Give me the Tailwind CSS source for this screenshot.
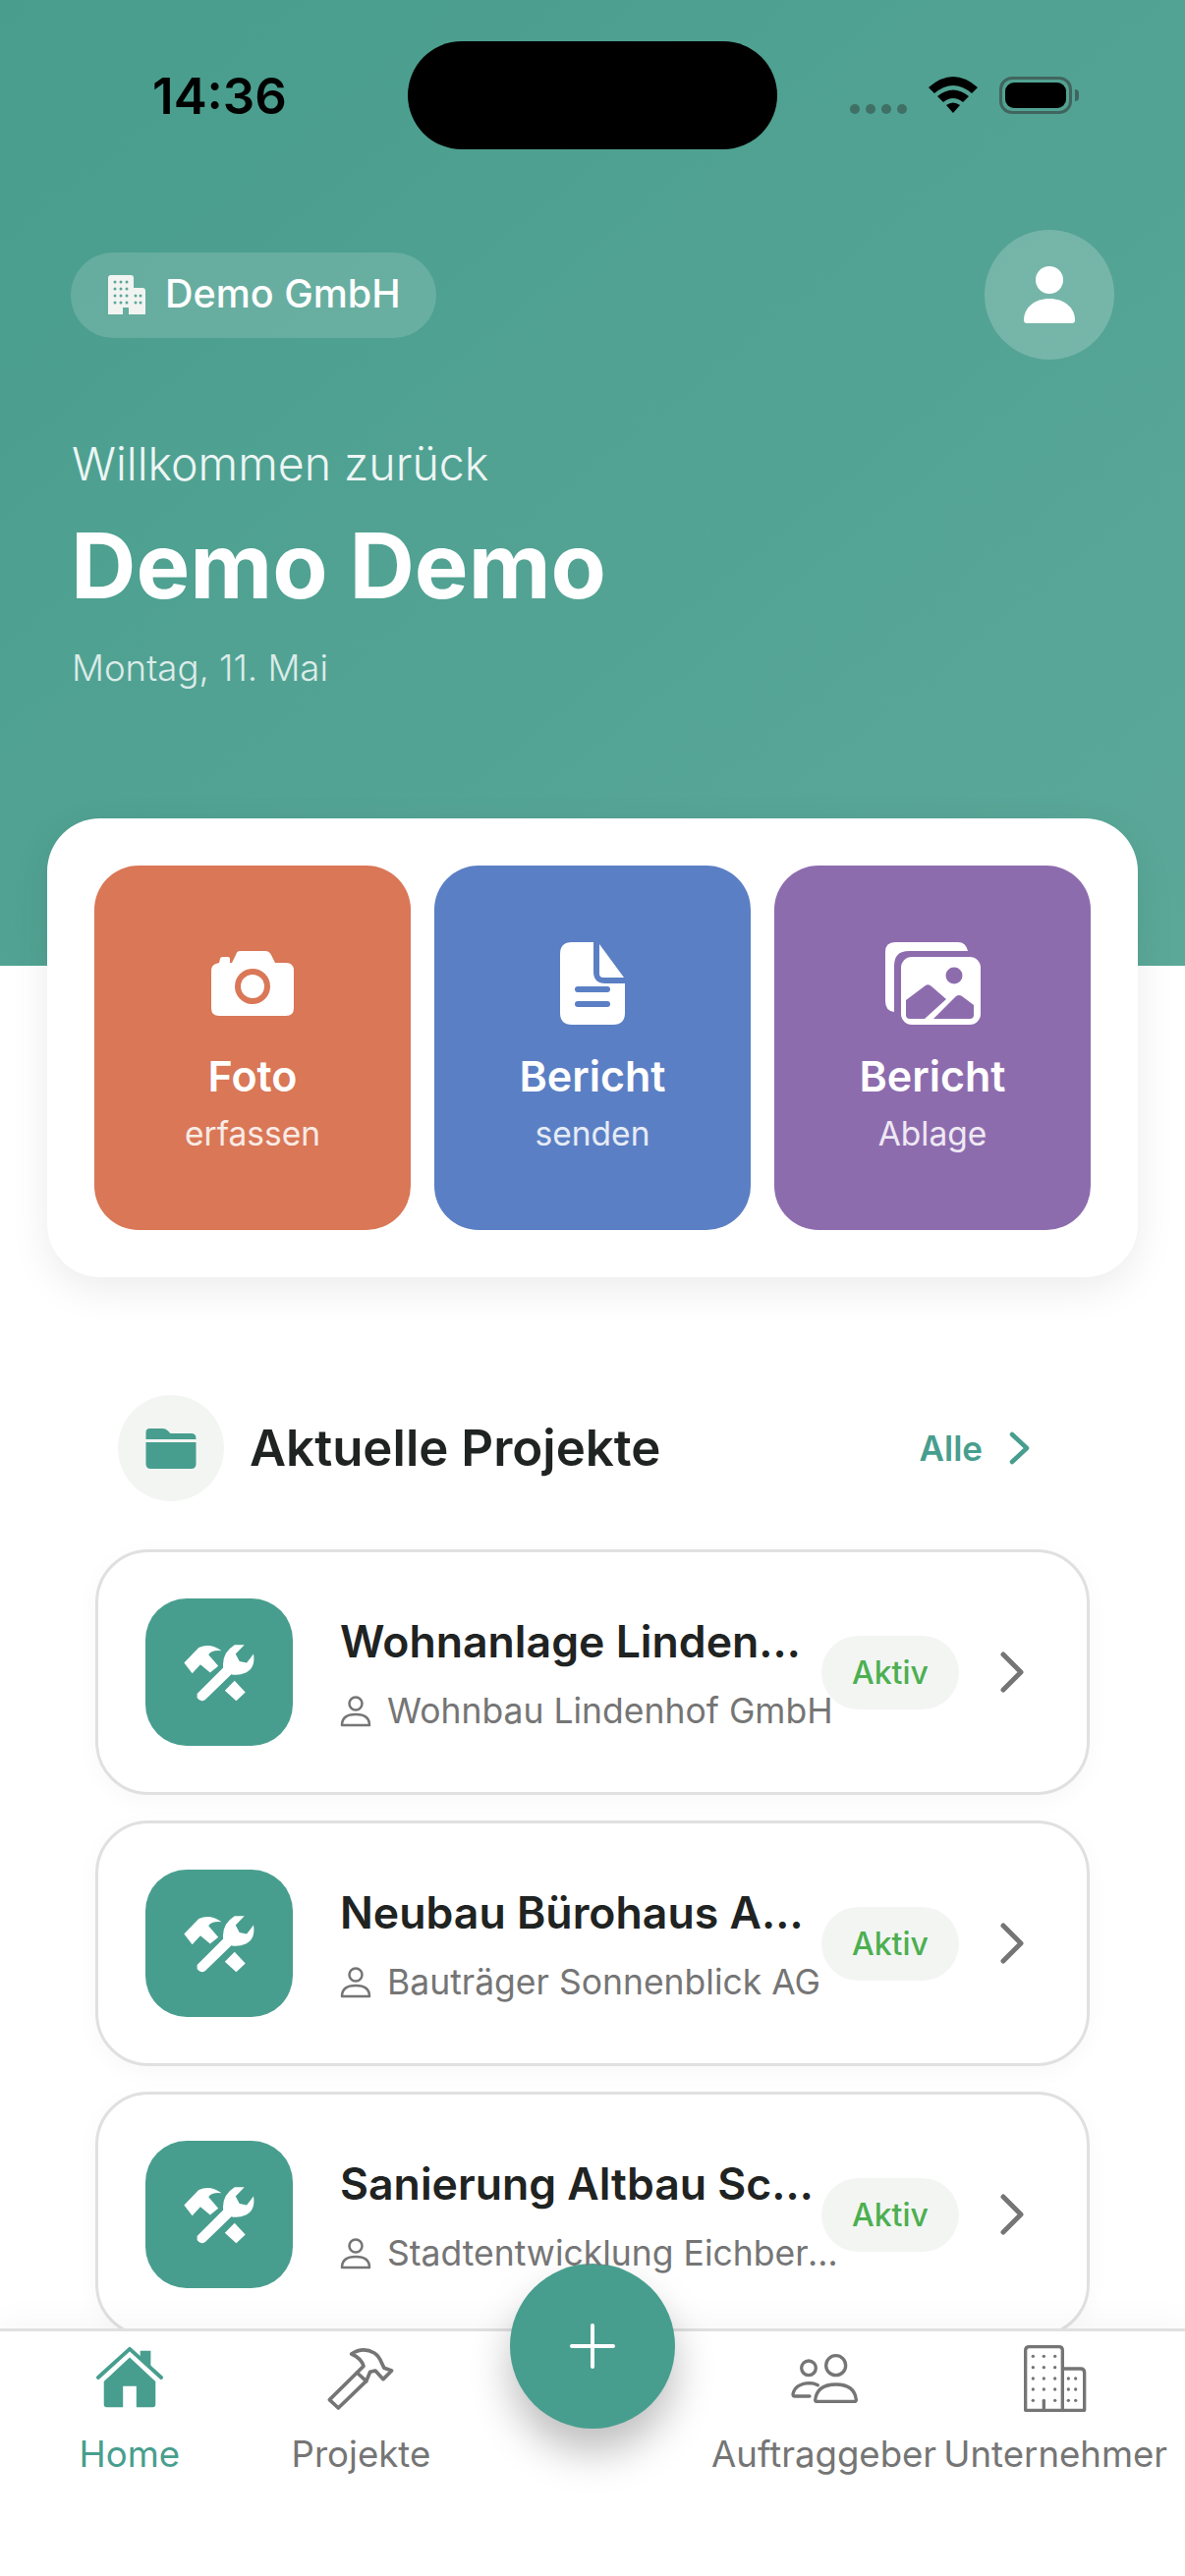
<!DOCTYPE html>
<html lang="de">
<head>
    <meta charset="UTF-8">
    <meta name="viewport" content="width=device-width, initial-scale=1.0">
    <title>Home - Demo GmbH</title>
    <script src="https://cdn.jsdelivr.net/npm/@tailwindcss/browser@4"></script>
</head>
<body class="bg-white">
<div class="relative w-[1206px] h-[2622px] flex flex-col overflow-hidden bg-white font-['Inter',sans-serif]">

    <!-- Header -->
    <header class="h-[983px] shrink-0 bg-linear-to-br from-[#489d8d] to-[#5ba899] pt-[42px]">
        <!-- Status bar -->
        <div class="flex items-center h-[110px]">
            <span class="ml-[155px] w-[137px] text-[51px] font-semibold leading-none text-black text-center">14:36</span>
            <div class="ml-[123px] w-[376px] h-[110px] rounded-[55px] bg-black"></div>
            <div class="ml-[74px] flex gap-[6px] mt-[28px]">
                <span class="w-[10px] h-[10px] rounded-full bg-[#3f6f65]"></span>
                <span class="w-[10px] h-[10px] rounded-full bg-[#3f6f65]"></span>
                <span class="w-[10px] h-[10px] rounded-full bg-[#3f6f65]"></span>
                <span class="w-[10px] h-[10px] rounded-full bg-[#3f6f65]"></span>
            </div>
            <svg class="ml-[22px]" width="50" height="38" viewBox="0 0 50 38" fill="#000">
                <path d="M0 11 Q25 -11 50 11 L44 17 Q25 1 6 17Z"/>
                <path d="M9 20 Q25 7 41 20 L35 26 Q25 18 15 26Z"/>
                <path d="M18 29 Q25 24 32 29 L25 37Z"/>
            </svg>
            <div class="ml-[22px] w-[74px] h-[38px] rounded-[13px] border-[3px] border-[#40655e] p-[3px]">
                <div class="w-full h-full rounded-[9px] bg-black"></div>
            </div>
            <div class="ml-[3px] w-[4px] h-[12px] rounded-r-full bg-[#40655e]"></div>
        </div>

        <!-- Firm + avatar -->
        <div class="mt-[82px] pl-[72px] pr-[72px] flex items-center justify-between">
            <div class="h-[87px] w-[372px] rounded-full bg-white/15 flex items-center pl-[38px]">
                <svg width="38" height="40" viewBox="0 0 38 40" fill="#f2f4f2">
                    <path d="M3 0 H23 Q26 0 26 3 V13 H35 Q38 13 38 16 V40 H21 V33 H15 V40 H0 V3 Q0 0 3 0Z"/>
                    <g fill="#5ca798">
                        <circle cx="7" cy="7" r="1.5"/><circle cx="13" cy="7" r="1.5"/><circle cx="19" cy="7" r="1.5"/>
                        <circle cx="7" cy="14" r="1.5"/><circle cx="13" cy="14" r="1.5"/><circle cx="19" cy="14" r="1.5"/>
                        <circle cx="7" cy="21" r="1.5"/><circle cx="13" cy="21" r="1.5"/><circle cx="19" cy="21" r="1.5"/>
                        <circle cx="7" cy="28" r="1.5"/><circle cx="13" cy="28" r="1.5"/><circle cx="19" cy="28" r="1.5"/>
                        <circle cx="28" cy="21" r="1.5"/><circle cx="33" cy="21" r="1.5"/>
                        <circle cx="28" cy="28" r="1.5"/><circle cx="33" cy="28" r="1.5"/>
                    </g>
                </svg>
                <span class="ml-[20px] text-[39.5px] font-medium text-white">Demo GmbH</span>
            </div>
            <div class="w-[132px] h-[132px] rounded-full bg-white/20 flex items-center justify-center">
                <svg width="54" height="58" viewBox="0 0 54 58" fill="#fff">
                    <circle cx="27" cy="14" r="14"/>
                    <path d="M1 55 C1 42 12 33 27 33 C42 33 53 42 53 55 Q53 58 50 58 L4 58 Q1 58 1 55Z"/>
                </svg>
            </div>
        </div>

        <!-- Greeting -->
        <p class="mt-[76px] ml-[73px] text-[46.5px] leading-[60px] font-light text-white/90">Willkommen zurück</p>
        <h1 class="mt-[24px] ml-[72px] text-[92px] leading-[100px] font-bold text-white">Demo Demo</h1>
        <p class="mt-[34px] ml-[73px] text-[36.6px] leading-[40px] font-light text-white/80">Montag, 11. Mai</p>
    </header>

    <!-- Quick actions -->
    <section class="relative mx-[48px] -mt-[150px] h-[467px] shrink-0 rounded-[54px] bg-white shadow-[0_12px_40px_rgba(0,0,0,0.08)] p-[48px] grid grid-cols-3 gap-[24px]">
        <div class="rounded-[45px] bg-[#d97757] flex flex-col items-center pt-[78px] text-white">
            <div class="h-[84px] flex items-center">
                <svg width="84" height="66" viewBox="0 0 84 66">
                    <path fill="#fff" d="M29 0 H55 Q59 0 61 4 L65 12 H76 Q84 12 84 20 V58 Q84 66 76 66 H8 Q0 66 0 58 V20 Q0 13 8 12 L9 8 Q9 6 12 6 H17 Q19 6 19 8 V12 H21 L25 4 Q26 0 29 0Z"/>
                    <circle cx="42" cy="36" r="18" fill="#d97757"/>
                    <circle cx="42" cy="36" r="12" fill="#fff"/>
                </svg>
            </div>
            <span class="mt-[27px] text-[43px] leading-[50px] font-semibold">Foto</span>
            <span class="mt-[14px] text-[33.5px] leading-[40px] text-white/85">erfassen</span>
        </div>
        <div class="rounded-[45px] bg-[#5b7fc4] flex flex-col items-center pt-[78px] text-white">
            <div class="h-[84px] flex items-center">
                <svg width="66" height="84" viewBox="0 0 66 84" fill="#fff">
                    <path d="M12 0 H34 V30 Q34 42 46 42 H66 V72 Q66 84 54 84 H12 Q0 84 0 72 V12 Q0 0 12 0Z"/>
                    <path d="M40 2 L65 36 H44 Q40 36 40 32Z"/>
                    <rect x="15" y="45" width="36" height="6" rx="3" fill="#5b7fc4"/>
                    <rect x="15" y="60" width="36" height="6" rx="3" fill="#5b7fc4"/>
                </svg>
            </div>
            <span class="mt-[27px] text-[43px] leading-[50px] font-semibold">Bericht</span>
            <span class="mt-[14px] text-[33.5px] leading-[40px] text-white/85">senden</span>
        </div>
        <div class="rounded-[45px] bg-[#8d6cae] flex flex-col items-center pt-[78px] text-white">
            <div class="h-[84px] flex items-center">
                <svg width="97" height="84" viewBox="0 0 97 84">
                    <path fill="#fff" d="M10 0 H74 Q82 0 84 9 H24 Q9 9 9 24 V71 Q0 70 0 60 V10 Q0 0 10 0Z"/>
                    <rect x="16" y="15" width="81" height="69" rx="11" fill="#fff"/>
                    <circle cx="70" cy="34" r="8.5" fill="#8d6cae"/>
                    <path fill="#8d6cae" d="M21 59 L41 44 Q44 42 47 45 L62 58 L40 78 H25 Q21 78 21 74Z"/>
                    <path fill="#8d6cae" d="M49 78 L72 55 Q75 53 78 55 L90 64 V74 Q90 78 86 78Z"/>
                </svg>
            </div>
            <span class="mt-[27px] text-[43px] leading-[50px] font-semibold">Bericht</span>
            <span class="mt-[14px] text-[33.5px] leading-[40px] text-white/85">Ablage</span>
        </div>
    </section>

    <!-- Projects -->
    <section class="flex-1 min-h-0 overflow-hidden pt-[120px] px-[97px]">
        <div class="flex items-center pl-[23px] pr-[59px]">
            <div class="w-[108px] h-[108px] rounded-full bg-[#f3f5f3] flex items-center justify-center">
                <svg width="52" height="41" viewBox="0 0 51 41" fill="#489e8e">
                    <path d="M4 0 H17 Q20 0 22 2 L25 5 H46 Q51 5 51 10 V11 H0 V4 Q0 0 4 0Z"/>
                    <path d="M0 14 H51 V36 Q51 41 46 41 H5 Q0 41 0 36Z"/>
                </svg>
            </div>
            <h2 class="ml-[26px] text-[51px] font-semibold text-[#1f2322]">Aktuelle Projekte</h2>
            <span class="ml-auto text-[35px] font-semibold text-[#489e8e]">Alle</span>
            <svg class="ml-[26px]" width="24" height="34" viewBox="0 0 24 34" fill="none" stroke="#489e8e" stroke-width="4.5" stroke-linecap="round" stroke-linejoin="round">
                <path d="M4 3 L19 17 L4 31"/>
            </svg>
        </div>

        <div class="mt-[49px] flex flex-col gap-[26px]">
            <!-- Card 1 -->
            <div class="h-[250px] shrink-0 rounded-[54px] border-[3px] border-[#e0e0e0] bg-white shadow-[0_6px_24px_rgba(0,0,0,0.03)] flex items-center pl-[48px]">
                <div class="w-[150px] h-[150px] shrink-0 rounded-[42px] bg-[#489e8e] flex items-center justify-center">
                    <svg width="78" height="63" viewBox="70 90 235 190" fill="#fff">
                        <path d="M80 155 L125 108 Q160 92 195 118 Q165 115 155 130 L185 165 L160 185 L130 160 L105 187 Z"/>
                        <path d="M205 240 L235 210 L268 245 L240 272Z"/>
                        <path d="M120 250 L200 170 Q195 125 235 100 L265 100 L238 128 L250 150 L272 155 L293 128 Q300 170 270 185 Q245 195 225 190 L145 268 Q130 278 120 262Z"/>
                    </svg>
                </div>
                <div class="ml-[48px] mt-[3px] w-[482px] shrink-0">
                    <p class="text-[44.6px] leading-[56px] font-semibold text-[#1f2322] truncate">Wohnanlage Lindenhof</p>
                    <div class="relative z-10 mt-[21px] w-[511px] flex items-center">
                        <svg class="shrink-0" width="32" height="32" viewBox="0 0 32 32" fill="none" stroke="#757575" stroke-width="2.5">
                            <circle cx="16" cy="8" r="6.5"/>
                            <path d="M2 30 Q2 19 16 19 Q30 19 30 30Z" stroke-linejoin="round"/>
                        </svg>
                        <span class="ml-[16px] text-[35.5px] leading-[44px] text-[#757575] truncate">Wohnbau Lindenhof GmbH</span>
                    </div>
                </div>
                <span class="ml-[8px] w-[140px] h-[75px] shrink-0 rounded-full bg-[#f3f5f3] flex items-center justify-center text-[32px] font-medium text-[#4caf50] pt-[2px]">Aktiv</span>
                <svg class="ml-[41px]" width="26" height="42" viewBox="0 0 26 42" fill="none" stroke="#757575" stroke-width="5" stroke-linecap="round" stroke-linejoin="round">
                    <path d="M4 3 L22 21 L4 39"/>
                </svg>
            </div>
            <!-- Card 2 -->
            <div class="h-[250px] shrink-0 rounded-[54px] border-[3px] border-[#e0e0e0] bg-white shadow-[0_6px_24px_rgba(0,0,0,0.03)] flex items-center pl-[48px]">
                <div class="w-[150px] h-[150px] shrink-0 rounded-[42px] bg-[#489e8e] flex items-center justify-center">
                    <svg width="78" height="63" viewBox="70 90 235 190" fill="#fff">
                        <path d="M80 155 L125 108 Q160 92 195 118 Q165 115 155 130 L185 165 L160 185 L130 160 L105 187 Z"/>
                        <path d="M205 240 L235 210 L268 245 L240 272Z"/>
                        <path d="M120 250 L200 170 Q195 125 235 100 L265 100 L238 128 L250 150 L272 155 L293 128 Q300 170 270 185 Q245 195 225 190 L145 268 Q130 278 120 262Z"/>
                    </svg>
                </div>
                <div class="ml-[48px] mt-[3px] w-[482px] shrink-0">
                    <p class="text-[44.6px] leading-[56px] font-semibold text-[#1f2322] truncate">Neubau Bürohaus Altstadt</p>
                    <div class="relative z-10 mt-[21px] w-[511px] flex items-center">
                        <svg class="shrink-0" width="32" height="32" viewBox="0 0 32 32" fill="none" stroke="#757575" stroke-width="2.5">
                            <circle cx="16" cy="8" r="6.5"/>
                            <path d="M2 30 Q2 19 16 19 Q30 19 30 30Z" stroke-linejoin="round"/>
                        </svg>
                        <span class="ml-[16px] text-[35.5px] leading-[44px] text-[#757575] truncate">Bauträger Sonnenblick AG</span>
                    </div>
                </div>
                <span class="ml-[8px] w-[140px] h-[75px] shrink-0 rounded-full bg-[#f3f5f3] flex items-center justify-center text-[32px] font-medium text-[#4caf50] pt-[2px]">Aktiv</span>
                <svg class="ml-[41px]" width="26" height="42" viewBox="0 0 26 42" fill="none" stroke="#757575" stroke-width="5" stroke-linecap="round" stroke-linejoin="round">
                    <path d="M4 3 L22 21 L4 39"/>
                </svg>
            </div>
            <!-- Card 3 -->
            <div class="h-[250px] shrink-0 rounded-[54px] border-[3px] border-[#e0e0e0] bg-white shadow-[0_6px_24px_rgba(0,0,0,0.03)] flex items-center pl-[48px]">
                <div class="w-[150px] h-[150px] shrink-0 rounded-[42px] bg-[#489e8e] flex items-center justify-center">
                    <svg width="78" height="63" viewBox="70 90 235 190" fill="#fff">
                        <path d="M80 155 L125 108 Q160 92 195 118 Q165 115 155 130 L185 165 L160 185 L130 160 L105 187 Z"/>
                        <path d="M205 240 L235 210 L268 245 L240 272Z"/>
                        <path d="M120 250 L200 170 Q195 125 235 100 L265 100 L238 128 L250 150 L272 155 L293 128 Q300 170 270 185 Q245 195 225 190 L145 268 Q130 278 120 262Z"/>
                    </svg>
                </div>
                <div class="ml-[48px] mt-[3px] w-[482px] shrink-0">
                    <p class="text-[44.6px] leading-[56px] font-semibold text-[#1f2322] truncate">Sanierung Altbau Schillerstraße</p>
                    <div class="relative z-10 mt-[21px] w-[511px] flex items-center">
                        <svg class="shrink-0" width="32" height="32" viewBox="0 0 32 32" fill="none" stroke="#757575" stroke-width="2.5">
                            <circle cx="16" cy="8" r="6.5"/>
                            <path d="M2 30 Q2 19 16 19 Q30 19 30 30Z" stroke-linejoin="round"/>
                        </svg>
                        <span class="ml-[16px] text-[35.5px] leading-[44px] text-[#757575] truncate">Stadtentwicklung Eichberg GmbH</span>
                    </div>
                </div>
                <span class="ml-[8px] w-[140px] h-[75px] shrink-0 rounded-full bg-[#f3f5f3] flex items-center justify-center text-[32px] font-medium text-[#4caf50] pt-[2px]">Aktiv</span>
                <svg class="ml-[41px]" width="26" height="42" viewBox="0 0 26 42" fill="none" stroke="#757575" stroke-width="5" stroke-linecap="round" stroke-linejoin="round">
                    <path d="M4 3 L22 21 L4 39"/>
                </svg>
            </div>
        </div>
    </section>

    <!-- Bottom nav -->
    <nav class="relative h-[252px] shrink-0 border-t-[3px] border-[#e0e0e0] bg-white shadow-[0_-10px_30px_rgba(0,0,0,0.03)] px-[14px] pt-[12px] grid grid-cols-5 items-start">
        <div class="flex flex-col items-center text-[#489e8e]">
            <svg width="72" height="72" viewBox="10 10 74 74" fill="#489e8e">
                <path d="M14 46 L47 16 L80 46" fill="none" stroke="#489e8e" stroke-width="4" stroke-linecap="round" stroke-linejoin="round"/>
                <path d="M58 18 H69 V36 L58 26Z"/>
                <path d="M20 50 L47 25 L74 50 V74 Q74 77 71 77 H54 V55 H40 V77 H23 Q20 77 20 74Z"/>
            </svg>
            <span class="mt-[19px] text-[36.6px] leading-[44px] font-normal">Home</span>
        </div>
        <div class="flex flex-col items-center text-[#757575]">
            <svg width="72" height="72" viewBox="735 32 216 216" fill="none" stroke="#757575" stroke-width="11" stroke-linejoin="round" stroke-linecap="round">
                <path d="M748 205 L832 122 L860 148 L775 230Z"/>
                <path d="M832 122 L852 102 Q845 78 815 65 Q850 42 885 62 Q900 72 908 94 L915 108 L938 116 L912 142 L888 116 L872 120 L860 148"/>
            </svg>
            <span class="mt-[19px] text-[36.6px] leading-[44px] font-normal">Projekte</span>
        </div>
        <div></div>
        <div class="flex flex-col items-center text-[#757575]">
            <svg width="72" height="72" viewBox="42 30 216 216" fill="none" stroke="#757575" stroke-width="10" stroke-linecap="round" stroke-linejoin="round">
                <circle cx="102" cy="106" r="22"/>
                <circle cx="185" cy="98" r="30"/>
                <path d="M122 203 Q128 156 185 156 Q242 156 247 203 Q247 208 240 208 H128 Q122 208 122 203Z"/>
                <path d="M130 158 Q118 152 105 152 Q60 154 54 186 Q54 192 60 192 H105"/>
            </svg>
            <span class="mt-[19px] text-[36.6px] leading-[44px] font-normal whitespace-nowrap">Auftraggeber</span>
        </div>
        <div class="flex flex-col items-center text-[#757575]">
            <svg width="72" height="72" viewBox="745 30 216 216">
                <g fill="none" stroke="#757575" stroke-width="10" stroke-linejoin="round">
                    <path d="M762 235 V52 Q762 41 774 41 H864 Q875 41 875 52 V235Z"/>
                    <path d="M875 108 H930 Q942 108 942 120 V235 H875"/>
                    <path d="M818 235 V205" stroke-linecap="round"/>
                </g>
                <g fill="#757575">
                    <circle cx="785" cy="70" r="5"/><circle cx="818" cy="70" r="5"/><circle cx="852" cy="70" r="5"/>
                    <circle cx="785" cy="104" r="5"/><circle cx="818" cy="104" r="5"/><circle cx="852" cy="104" r="5"/>
                    <circle cx="785" cy="138" r="5"/><circle cx="818" cy="138" r="5"/><circle cx="852" cy="138" r="5"/>
                    <circle cx="785" cy="171" r="5"/><circle cx="818" cy="171" r="5"/><circle cx="852" cy="171" r="5"/>
                    <circle cx="785" cy="205" r="5"/><circle cx="852" cy="205" r="5"/>
                    <circle cx="893" cy="138" r="5"/><circle cx="915" cy="138" r="5"/>
                    <circle cx="893" cy="171" r="5"/><circle cx="915" cy="171" r="5"/>
                    <circle cx="893" cy="205" r="5"/><circle cx="915" cy="205" r="5"/>
                </g>
            </svg>
            <span class="mt-[19px] text-[36.6px] leading-[44px] font-normal whitespace-nowrap">Unternehmer</span>
        </div>

        <!-- Add button sits over the nav border -->
        <button class="absolute left-[519px] -top-[69px] w-[168px] h-[168px] rounded-full bg-[#489e8e] shadow-[0_24px_40px_rgba(0,0,0,0.25)] flex items-center justify-center">
            <svg width="46" height="46" viewBox="0 0 46 46" stroke="#fff" stroke-width="4" stroke-linecap="round">
                <path d="M23 2 V44 M2 23 H44"/>
            </svg>
        </button>
    </nav>
</div>
</body>
</html>
